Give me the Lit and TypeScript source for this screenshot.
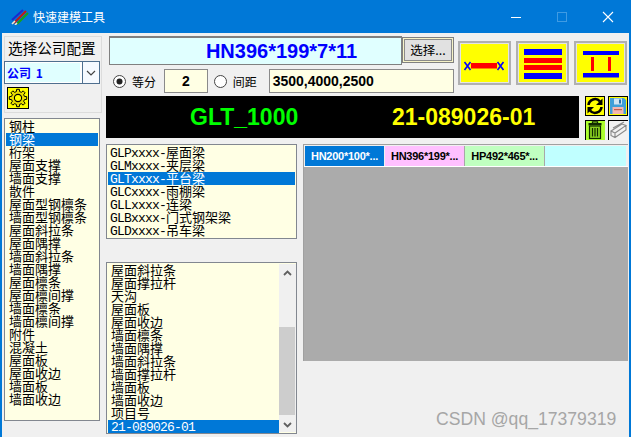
import { LitElement, html, css } from "lit";
import { customElement } from "lit/decorators.js";

const L1 = ["钢柱","钢梁","桁架","屋面支撑","墙面支撑","散件","屋面型钢檩条","墙面型钢檩条","屋面斜拉条","屋面隅撑","墙面斜拉条","墙面隅撑","屋面檩条","屋面檩间撑","墙面檩条","墙面檩间撑","附件","混凝土","屋面板","屋面收边","墙面板","墙面收边"];
const L2 = ["GLPxxxx-屋面梁","GLMxxxx-夹层梁","GLTxxxx-平台梁","GLCxxxx-雨棚梁","GLLxxxx-连梁","GLBxxxx-门式钢架梁","GLDxxxx-吊车梁"];
const L3 = ["屋面斜拉条","屋面撑拉杆","天沟","屋面板","屋面收边","墙面檩条","墙面隅撑","墙面斜拉条","墙面撑拉杆","墙面板","墙面收边","项目号","21-089026-01"];

function gearPath(cx: number, cy: number, ro: number, ri: number, n: number) {
  const pts: string[] = [];
  for (let i = 0; i < n; i++) {
    const a = (i / n) * Math.PI * 2;
    const w = (Math.PI * 2) / n;
    const add = (r: number, t: number) => pts.push(`${(cx + r * Math.cos(t)).toFixed(2)},${(cy + r * Math.sin(t)).toFixed(2)}`);
    add(ri, a - w * 0.32);
    add(ro, a - w * 0.2);
    add(ro, a + w * 0.2);
    add(ri, a + w * 0.32);
  }
  return pts.join(" ");
}

function item(t: string, selected: boolean) {
  const parts = t.split(/([\x00-\x7f]+)/).filter(Boolean);
  return html`<div class="item ${selected ? "sel" : ""}">${parts.map((p) =>
    /^[\x00-\x7f]/.test(p) ? html`<span class="latin">${p}</span>` : p)}</div>`;
}

@customElement("app-root")
export class AppRoot extends LitElement {
  static styles = css`
    :host { display: block; width: 631px; height: 437px; overflow: hidden; position: relative;
      font-family: "Noto Sans CJK SC", "Liberation Sans", sans-serif; background: #f0f0f0; color: #000; }
    .win { box-sizing: border-box; width: 631px; height: 437px; border-left: 2px solid #0078d7; border-right: 2px solid #0078d7; display: flex; flex-direction: column; }
    .title { height: 33px; margin: 0 -2px; background: #0078d7; color: #fff; display: flex; align-items: center; font-size: 12px; flex: none; }
    .logo { margin-left: 11px; width: 18px; height: 16px; flex: none; }
    .title span { margin-left: 4px; margin-top: 1px; line-height: 16px; }
    .ctrls { margin-left: auto; display: flex; align-items: center; }
    .ctrls svg { display: block; width: 12px; height: 12px; }
    .ctl { width: 46px; display: flex; justify-content: center; }
    .main { flex: 1; display: flex; padding: 3px 0 0 2px; min-height: 0; }
    .left { width: 98px; flex: none; display: flex; flex-direction: column; margin-right: 4px; }
    .cfg { box-sizing: border-box; height: 77px; border: 1px solid #dcdcdc; }
    .cfg-l { font-size: 14.6px; line-height: 16px; margin: 3px 0 0 3px; white-space: nowrap; }
    .combo { box-sizing: border-box; width: 96px; margin: 5px 0 0 -1px; height: 23px; border: 1px solid #4f6f8f; display: flex; background: #fff; }
    .combo-v { flex: 1; margin: 1px 2px 1px 1px; background: #e0ffff; color: #0000ff; font-weight: 700; font-size: 12px; word-spacing: 2px; line-height: 19px; padding-left: 1px; white-space: nowrap; }
    .combo-b { width: 16px; border-left: 1px solid #4f6f8f; background: #f6faff; display: flex; align-items: center; justify-content: center; }
    .gear { box-sizing: border-box; display: block; margin: 3px 0 0 2px; width: 22px; height: 22px; background: #ffff00; border: 1px solid #000; }
    .list { box-sizing: border-box; border: 1px solid #828790; background: #ffffe4; padding: 1px; font-size: 13px; }
    .l1 { width: 96px; height: 303px; margin-top: 5px; }
    .l1 .item { padding-left: 3px; }
    .item { height: 13px; line-height: 11px; padding-left: 2px; white-space: nowrap; }
    .latin { font-family: "Liberation Mono", monospace; font-size: 13px; letter-spacing: -0.8px; }
    .item.sel { background: #0078d7; color: #fff; }
    .right { width: 522px; flex: none; display: flex; flex-direction: column; }
    .top { display: flex; height: 57px; flex: none; }
    .form { width: 348px; flex: none; }
    .r1 { display: flex; height: 29px; padding-left: 3px; }
    .disp { box-sizing: border-box; width: 293px; height: 29px; border: 1px solid #808080; border-width: 2px 1px 1px 1px; background: #e0ffff; color: #0000ff; font: 700 20px/26px "Liberation Sans", sans-serif; text-align: center; padding-left: 52px; }
    .btn { box-sizing: border-box; width: 52px; height: 26px; margin-top: 1px; border: 1px solid #808080; background: #e1e1e1; box-shadow: inset 0 0 0 1px #f6f3c8, inset 0 0 0 2px #8a8a8a; font-size: 12.5px; line-height: 23px; text-align: center; white-space: nowrap; }
    .r2 { display: flex; align-items: center; height: 24px; margin-top: 4px; font-size: 12px; padding-left: 7px; }
    .radio { width: 13px; height: 13px; flex: none; display: block; }
    .lab { margin-left: 6px; width: 24px; white-space: nowrap; }
    .inp { box-sizing: border-box; height: 24px; border: 1px solid #8a8a8a; background: #ffffe4; font: 700 14px/22px "Liberation Sans", sans-serif; }
    .inp.a { width: 44px; margin-left: 8px; margin-right: 6px; text-align: center; }
    .inp.b { width: 187px; margin-left: 12px; padding-left: 3px; }
    .icons { display: flex; gap: 5px; margin: 5px 0 0 4px; }
    .ib { box-sizing: border-box; width: 53px; height: 44px; border: 2px solid #b0b0b0; padding: 1px; background: #e4e4e4; }
    .ib svg { display: block; width: 47px; height: 38px; background: #ffff00; }
    .band-row { display: flex; height: 44px; margin-top: 3px; flex: none; }
    .band { width: 473px; height: 42px; background: #000; display: flex; align-items: center; padding-left: 84px; box-sizing: border-box; font: 700 23px/42px "Liberation Sans", sans-serif; }
    .band .g { color: #00ff00; width: 108px; white-space: nowrap; }
    .band .y { color: #ffff00; margin-left: 94px; white-space: nowrap; }
    .minis { display: grid; grid-template-columns: 20px 20px; grid-auto-rows: 20px; gap: 4px 3px; margin-left: 6px; }
    .minis svg { display: block; width: 20px; height: 20px; }
    .lower { display: flex; margin-top: 4px; flex: none; }
    .col { width: 191px; flex: none; display: flex; flex-direction: column; gap: 23px; }
    .l2 { height: 95px; width: 191px; }
    .l3 { height: 172px; width: 191px; display: flex; }
    .l3-items { width: 171px; flex: none; }
    .l3 .item { padding-left: 3px; }
    .sb { width: 17px; flex: none; display: flex; flex-direction: column; background: #f0f0f0; }
    .sb-a { height: 17px; display: flex; align-items: center; justify-content: center; flex: none; }
    .sb-t { height: 88px; width: 16px; margin: 46px 0 1px 0; background: #cdcdcd; flex: none; }
    .grid { width: 325px; height: 217px; margin-left: 6px; background: #ababab; flex: none; border-top: 1px solid #a0a0a0; border-left: 1px solid #a0a0a0; box-sizing: border-box; }
    .cells { display: flex; background: #f0f0f0; padding: 1px 1px 0 1px; height: 22px; box-sizing: border-box; border-bottom: 1px solid #ffffff; }
    .cell { box-sizing: border-box; height: 20px; border-right: 1px solid #a8a8a8; font: 700 11px/20px "Liberation Sans", sans-serif; letter-spacing: -0.25px; text-align: center; white-space: nowrap; flex: none; }
    .c1 { width: 80px; background: #0078d7; color: #fff; border-right: 1px solid #f0f0f0; }
    .c2 { width: 80px; background: #ffc0ff; }
    .c3 { width: 80px; background: #c0ffc0; }
    .c4 { width: 81px; background: #c0ffff; border-right: none; }
    .mark { position: absolute; left: 436px; top: 408px; font: 400 17.6px/22px "Liberation Sans", sans-serif; color: #a6a6a6; white-space: nowrap; }
  `;

  render() {
    return html`
      <div class="win">
        <div class="title">
          <svg class="logo" viewBox="0 0 18 16">
            <path d="M3 14 L15 2" stroke="#c01818" stroke-width="2.2"/>
            <path d="M6 15 L17 4" stroke="#18a018" stroke-width="2.2"/>
            <path d="M1 11 L12 1" stroke="#1a2ad0" stroke-width="2"/>
            <path d="M1 15 L4 12 M4 16 L6 14" stroke="#f4e8d0" stroke-width="1.6"/>
          </svg>
          <span>快速建模工具</span>
          <div class="ctrls">
            <div class="ctl"><svg viewBox="0 0 12 12"><path d="M1 6.5 H11" stroke="#fff" stroke-width="1"/></svg></div>
            <div class="ctl"><svg viewBox="0 0 12 12"><rect x="1.5" y="1.5" width="9" height="9" fill="none" stroke="#3f9be3"/></svg></div>
            <div class="ctl"><svg viewBox="0 0 12 12"><path d="M1 1 L11 11 M11 1 L1 11" stroke="#fff" stroke-width="1.1"/></svg></div>
          </div>
        </div>
        <div class="main">
          <div class="left">
            <div class="cfg">
              <div class="cfg-l">选择公司配置</div>
              <div class="combo">
                <div class="combo-v">公司 1</div>
                <div class="combo-b"><svg width="10" height="6" viewBox="0 0 10 6"><path d="M1 1 L5 5 L9 1" fill="none" stroke="#444" stroke-width="1.2"/></svg></div>
              </div>
              <svg class="gear" viewBox="0 0 20 20">
                <polygon points="${gearPath(10, 10, 8.8, 6.6, 8)}" fill="#e8dc00" stroke="#000" stroke-width="1"/>
                <circle cx="10" cy="10" r="3.6" fill="#ffff00" stroke="#000" stroke-width="1.1"/>
              </svg>
            </div>
            <div class="list l1">${L1.map((t, i) => item(t, i === 1))}</div>
          </div>
          <div class="right">
            <div class="top">
              <div class="form">
                <div class="r1">
                  <div class="disp">HN396*199*7*11</div>
                  <div class="btn">选择...</div>
                </div>
                <div class="r2">
                  <svg class="radio" viewBox="0 0 13 13"><circle cx="6.5" cy="6.5" r="6" fill="#fff" stroke="#444"/><circle cx="6.5" cy="6.5" r="3" fill="#222"/></svg>
                  <div class="lab">等分</div>
                  <div class="inp a">2</div>
                  <svg class="radio" viewBox="0 0 13 13"><circle cx="6.5" cy="6.5" r="6" fill="#fff" stroke="#444"/></svg>
                  <div class="lab">间距</div>
                  <div class="inp b">3500,4000,2500</div>
                </div>
              </div>
              <div class="icons">
                <div class="ib"><svg viewBox="0 0 47 38">
                  <rect x="10" y="19" width="26" height="5.5" fill="#ff0000"/>
                  <path d="M3.5 18 L9.5 26 M9.5 18 L3.5 26 M36.5 18 L42.5 26 M42.5 18 L36.5 26" stroke="#0000ff" stroke-width="1.6"/>
                </svg></div>
                <div class="ib"><svg viewBox="0 0 47 38">
                  <rect x="5" y="5" width="38" height="6" fill="#0000ff"/>
                  <rect x="5" y="14" width="38" height="5" fill="#ff0000"/>
                  <rect x="5" y="21" width="38" height="5" fill="#ff0000"/>
                  <rect x="5" y="29" width="38" height="6" fill="#0000ff"/>
                </svg></div>
                <div class="ib"><svg viewBox="0 0 47 38">
                  <rect x="6" y="7" width="36" height="4" fill="#0000ff"/>
                  <rect x="6" y="29" width="36" height="4.5" fill="#0000ff"/>
                  <rect x="14" y="13" width="3" height="14" fill="#ff0000"/>
                  <rect x="31" y="13" width="3" height="14" fill="#ff0000"/>
                </svg></div>
              </div>
            </div>
            <div class="band-row">
              <div class="band"><div class="g">GLT_1000</div><div class="y">21-089026-01</div></div>
              <div class="minis">
                <svg viewBox="0 0 20 20"><rect width="20" height="20" fill="#000"/><rect x="1" y="1" width="18" height="18" fill="#ffff00"/>
                  <path d="M3.5 9 A6.5 6.5 0 0 1 15 5.5" fill="none" stroke="#000" stroke-width="2.6"/><path d="M17.5 2.5 V9 H11 Z" fill="#000"/>
                  <path d="M16.5 11 A6.5 6.5 0 0 1 5 14.5" fill="none" stroke="#000" stroke-width="2.6"/><path d="M2.5 17.5 V11 H9 Z" fill="#000"/></svg>
                <svg viewBox="0 0 20 20"><rect width="20" height="20" fill="#000"/><rect x="1" y="1" width="18" height="18" fill="#ffff00"/>
                  <path d="M2 2 H16 L18 4 V18 H2 Z" fill="#3f9fd8"/><rect x="6" y="2.5" width="8" height="6" fill="#cfe4f2"/><rect x="11" y="3.5" width="2" height="4" fill="#2a6fa8"/><rect x="4.5" y="11" width="11" height="7" fill="#f4b6b0"/><rect x="6" y="13" width="8" height="1.2" fill="#c06050"/></svg>
                <svg viewBox="0 0 20 20"><rect width="20" height="20" fill="#adff2f"/><rect x="0" y="0" width="20" height="1" fill="#000"/><rect x="0" y="0" width="1" height="20" fill="#000"/>
                  <path d="M7.5 3 V1.8 H12.5 V3" fill="none" stroke="#102a00" stroke-width="1.3"/><rect x="3.5" y="3" width="13" height="2.4" fill="#102a00"/>
                  <rect x="4.5" y="6" width="11" height="12.5" fill="#8ad020" stroke="#102a00" stroke-width="1.2"/><path d="M7.5 8 V16.5 M10 8 V16.5 M12.5 8 V16.5" stroke="#102a00" stroke-width="1.2"/></svg>
                <svg viewBox="0 0 20 20"><rect width="20" height="20" fill="#f2f2f2"/><path d="M0 .5 H20 M.5 0 V20" stroke="#000"/>
                  <path d="M3 11 L14 4 L18 5.5 L7 13 Z M3 11 V15.5 L7 17.5 L18 10 V5.5 M7 13 V17.5 M5 8 L16 2" fill="none" stroke="#8a8a8a" stroke-width="1.1"/></svg>
              </div>
            </div>
            <div class="lower">
              <div class="col">
                <div class="list l2">${L2.map((t, i) => item(t, i === 2))}</div>
                <div class="list l3">
                  <div class="l3-items">${L3.map((t, i) => item(t, i === 12))}</div>
                  <div class="sb">
                    <div class="sb-a"><svg width="9" height="6" viewBox="0 0 9 6"><path d="M1 5 L4.5 1.5 L8 5" fill="none" stroke="#606060" stroke-width="1.8"/></svg></div>
                    <div class="sb-t"></div>
                    <div class="sb-a"><svg width="9" height="6" viewBox="0 0 9 6"><path d="M1 1 L4.5 4.5 L8 1" fill="none" stroke="#606060" stroke-width="1.8"/></svg></div>
                  </div>
                </div>
              </div>
              <div class="grid">
                <div class="cells">
                  <div class="cell c1">HN200*100*...</div>
                  <div class="cell c2">HN396*199*...</div>
                  <div class="cell c3">HP492*465*...</div>
                  <div class="cell c4"></div>
                </div>
              </div>
            </div>
          </div>
        </div>
      </div>
      <div class="mark">CSDN @qq_17379319</div>
    `;
  }
}
